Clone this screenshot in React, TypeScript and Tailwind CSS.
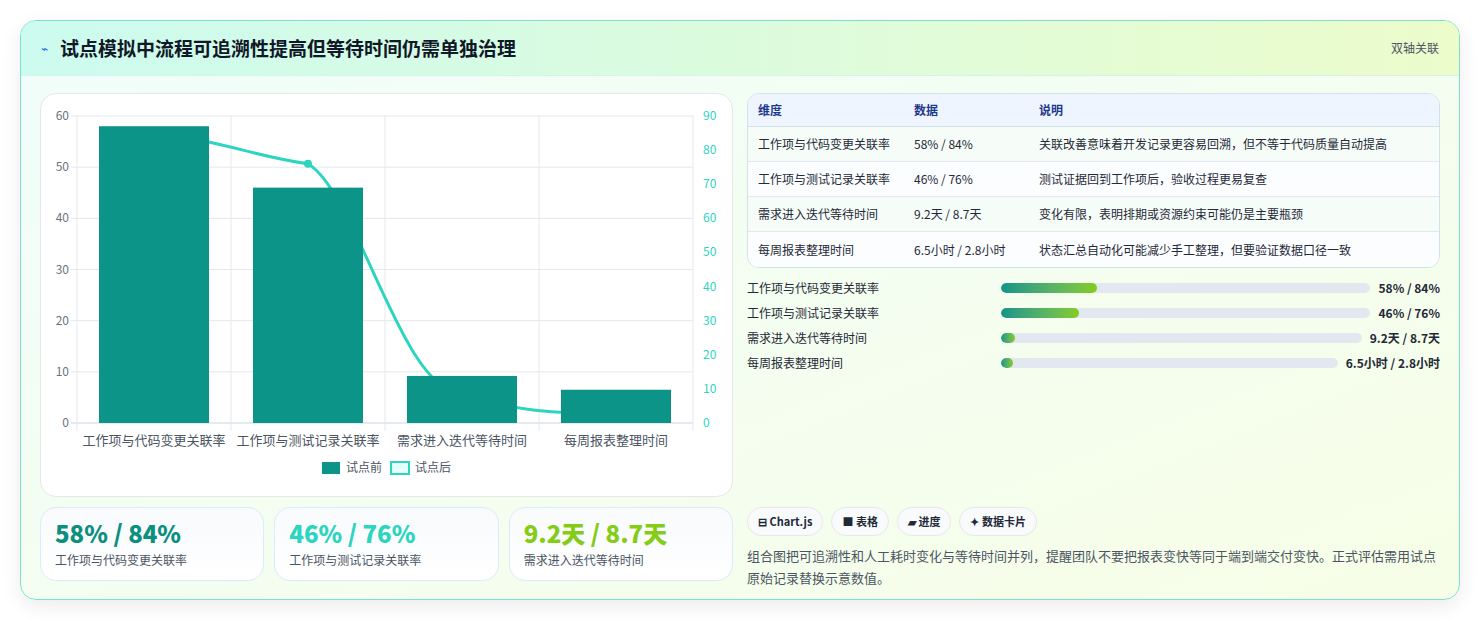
import React from "react";

const F = { fontFamily: '"Noto Sans CJK SC", "Noto Sans", sans-serif' };

const rows = [
  ["工作项与代码变更关联率", "58% / 84%", "关联改善意味着开发记录更容易回溯，但不等于代码质量自动提高"],
  ["工作项与测试记录关联率", "46% / 76%", "测试证据回到工作项后，验收过程更易复查"],
  ["需求进入迭代等待时间", "9.2天 / 8.7天", "变化有限，表明排期或资源约束可能仍是主要瓶颈"],
  ["每周报表整理时间", "6.5小时 / 2.8小时", "状态汇总自动化可能减少手工整理，但要验证数据口径一致"],
];
const bars = [
  ["工作项与代码变更关联率", "58% / 84%", 26],
  ["工作项与测试记录关联率", "46% / 76%", 21],
  ["需求进入迭代等待时间", "9.2天 / 8.7天", 4],
  ["每周报表整理时间", "6.5小时 / 2.8小时", 3.5],
] as const;

function Chart() {
  const L = 76, R = 692, T = 115, B = 422, H = B - T;
  const cw = (R - L) / 4;
  const before = [58, 46, 9.2, 6.5];
  const after = [84, 76, 8.7, 2.8];
  const cx = (i: number) => L + cw * i + cw / 2;
  const yl = (v: number) => B - (v / 60) * H;
  const yr = (v: number) => B - (v / 90) * H;
  const pts = after.map((v, i) => [cx(i), yr(v)]);
  const d = `M${pts[0][0]},${pts[0][1]} C${pts[0][0] + 60},${pts[0][1]} ${pts[1][0] - 60},${pts[1][1] - 8} ${pts[1][0]},${pts[1][1]} C${pts[1][0] + 50},${pts[1][1] + 30} ${pts[2][0] - 60},${pts[2][1]} ${pts[2][0]},${pts[2][1]} C${pts[2][0] + 50},${pts[2][1] + 18} ${pts[3][0] - 60},${pts[3][1]} ${pts[3][0]},${pts[3][1]}`;
  return (
    <svg width="692" height="403" viewBox="40 93 692 403" className="block">
      {[0, 10, 20, 30, 40, 50, 60].map((v) => (
        <g key={v}>
          <line x1={L - 6} x2={R} y1={yl(v)} y2={yl(v)} stroke={v === 0 ? "#cbd5e1" : "#e5e7eb"} />
          <text x={L - 8} y={yl(v) + 4} textAnchor="end" fontSize="12" fill="#6b7280" style={F}>{v}</text>
        </g>
      ))}
      {[0, 10, 20, 30, 40, 50, 60, 70, 80, 90].map((v) => (
        <text key={v} x={R + 10} y={yr(v) + 4} fontSize="12" fill="#2dd4bf" style={F}>{v}</text>
      ))}
      {[0, 1, 2, 3, 4].map((i) => (
        <line key={i} x1={L + cw * i} x2={L + cw * i} y1={T} y2={B + 8} stroke="#e5e7eb" />
      ))}
      <path d={d} fill="none" stroke="#2dd4bf" strokeWidth="3" />
      <circle cx={pts[1][0]} cy={pts[1][1]} r="4" fill="#2dd4bf" />
      {before.map((v, i) => (
        <rect key={i} x={cx(i) - 55} y={yl(v)} width="110" height={B - yl(v)} fill="#0d9488" />
      ))}
      {bars.map((b, i) => (
        <text key={i} x={cx(i)} y={444} textAnchor="middle" fontSize="13" fill="#4b5563" style={F}>{b[0]}</text>
      ))}
      <rect x="321" y="461" width="18" height="12" fill="#0d9488" />
      <text x="345" y="471" fontSize="12" fill="#4b5563" style={F}>试点前</text>
      <rect x="390" y="461" width="18" height="12" fill="#e6fffb" stroke="#2dd4bf" strokeWidth="2" />
      <text x="414" y="471" fontSize="12" fill="#4b5563" style={F}>试点后</text>
    </svg>
  );
}

export default function App() {
  return (
    <div className="w-[1480px] h-[620px] bg-white p-5 pb-[20px]" style={F}>
      <div className="h-[580px] rounded-2xl border border-[#7fe0cf] bg-gradient-to-br from-[#f0fdfa] to-[#f7fee7] shadow-[0_6px_20px_rgba(0,0,0,0.08)] overflow-hidden flex flex-col">
        <div className="h-[55px] flex items-center justify-between px-5 bg-gradient-to-r from-[#ccfbef] to-[#ecfccb] border-b border-[#d1f5ea]">
          <div className="flex items-center gap-3">
            <span className="text-[#2563eb] text-xs">⌁</span>
            <span className="text-[19px] font-bold text-[#111827]">试点模拟中流程可追溯性提高但等待时间仍需单独治理</span>
          </div>
          <span className="text-xs text-[#4b5563]">双轴关联</span>
        </div>
        <div className="flex gap-[14px] px-[19px] pt-[17px]">
          <div className="w-[693px] flex flex-col gap-[10px]">
            <div className="h-[404px] bg-white rounded-2xl border border-[#e5e7eb] overflow-hidden">
              <Chart />
            </div>
            <div className="grid grid-cols-3 gap-[10px]">
              {[
                ["58% / 84%", "工作项与代码变更关联率", "text-[#0d8f7f]"],
                ["46% / 76%", "工作项与测试记录关联率", "text-[#2dd4bf]"],
                ["9.2天 / 8.7天", "需求进入迭代等待时间", "text-[#84cc16]"],
              ].map(([v, l, c]) => (
                <div key={l} className="h-[74px] rounded-2xl border border-[#dbeafe] bg-gradient-to-b from-[#f8fafc] to-white px-[14px] pt-2">
                  <div className={`text-[24px] font-extrabold leading-[34px] ${c}`}>{v}</div>
                  <div className="text-xs text-[#4b5563] mt-0.5">{l}</div>
                </div>
              ))}
            </div>
          </div>
          <div className="flex-1 flex flex-col">
            <div className="rounded-xl border border-[#cfe3e8] overflow-hidden bg-white text-xs">
              <div className="flex h-[33px] items-center bg-[#eef5ff] text-[#1e3a8a] font-semibold border-b border-[#cfe3e8]">
                <div className="w-[166px] pl-[10px]">维度</div>
                <div className="w-[125px]">数据</div>
                <div>说明</div>
              </div>
              {rows.map((r, i) => (
                <div key={i} className={`flex h-[35px] items-center text-[#1f2937] ${i < 3 ? "border-b border-[#e2e8f0]" : ""} ${i % 2 ? "bg-[#fbfdff]" : "bg-[#f6fdf9]"}`}>
                  <div className="w-[166px] pl-[10px]">{r[0]}</div>
                  <div className="w-[125px]">{r[1]}</div>
                  <div>{r[2]}</div>
                </div>
              ))}
            </div>
            <div className="flex flex-col gap-[9px] mt-[12px]">
              {bars.map((b) => (
                <div key={b[0]} className="flex items-center h-[16px] text-xs">
                  <div className="w-[246px] text-[#1f2937] shrink-0">{b[0]}</div>
                  <div className="flex-1 h-[10px] rounded-full bg-[#e2e8f0] mx-2 overflow-hidden">
                    <div className="h-full rounded-full bg-gradient-to-r from-[#0d9488] to-[#84cc16]" style={{ width: `${b[2]}%` }} />
                  </div>
                  <div className="font-bold text-[#1f2937] shrink-0">{b[1]}</div>
                </div>
              ))}
            </div>
            <div className="flex-1" />
            <div className="flex gap-2 mt-[136px]">
              {["⊟ Chart.js", "■ 表格", "▰ 进度", "✦ 数据卡片"].map((t) => (
                <span key={t} className="h-[29px] px-[10px] flex items-center rounded-full border border-[#e5e7eb] bg-[#f8fafc] text-[11px] font-semibold text-[#1f2937]">{t}</span>
              ))}
            </div>
            <p className="text-[13px] leading-[22px] text-[#4b5563] mt-[9px]">组合图把可追溯性和人工耗时变化与等待时间并列，提醒团队不要把报表变快等同于端到端交付变快。正式评估需用试点原始记录替换示意数值。</p>
          </div>
        </div>
      </div>
    </div>
  );
}
